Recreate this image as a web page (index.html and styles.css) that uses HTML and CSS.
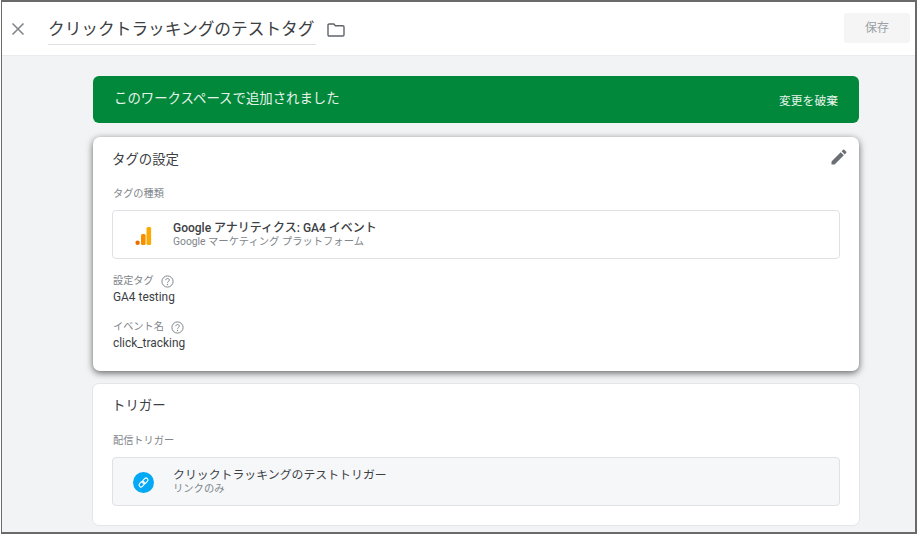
FILE: index.html
```html
<!doctype html>
<html lang="ja">
<head>
<meta charset="UTF-8">
<title>クリックトラッキングのテストタグ</title>
<link rel="stylesheet" href="styles.css">
</head>
<body>
<div class="frame">
  <div class="top">
    <svg class="close" width="14" height="14" viewBox="0 0 14 14"><path d="M1.5 1.5l11 11M12.5 1.5l-11 11" stroke="#80868b" stroke-width="1.6" fill="none"/></svg>
    <div class="name">クリックトラッキングのテストタグ</div>
    <svg class="folder" width="18" height="14" viewBox="0 0 18 14"><path d="M1 2.2C1 1.5 1.5 1 2.2 1h4.6l1.6 1.8h7.4c.7 0 1.2.5 1.2 1.2v7.8c0 .7-.5 1.2-1.2 1.2H2.2c-.7 0-1.2-.5-1.2-1.2z" stroke="#5f6368" stroke-width="1.4" fill="none"/></svg>
    <div class="save">保存</div>
  </div>
  <div class="main">
    <div class="banner">
      <span class="banner-text">このワークスペースで追加されました</span>
      <span class="discard">変更を破棄</span>
    </div>
    <div class="card raised">
      <svg class="pencil" width="20" height="20" viewBox="0 0 24 24"><path fill="#6b6f73" d="M3 17.25V21h3.75L17.81 9.94l-3.75-3.75L3 17.25zM20.71 7.04a1 1 0 0 0 0-1.41l-2.34-2.34a1 1 0 0 0-1.41 0l-1.83 1.83 3.75 3.75 1.83-1.83z"/></svg>
      <h2 class="card-title">タグの設定</h2>
      <div class="label first">タグの種類</div>
      <div class="row">
        <div class="row-icon">
          <svg width="20" height="20" viewBox="0 0 20 20"><rect x="13.5" y="1" width="4.6" height="18" rx="1.5" fill="#f9ab00"/><rect x="8" y="8" width="4.6" height="11" rx="1.5" fill="#f98d00"/><circle cx="4.6" cy="16.8" r="2.2" fill="#e86f00"/></svg>
        </div>
        <div>
          <div class="row-name strong">Google アナリティクス: GA4 イベント</div>
          <div class="row-sub">Google マーケティング プラットフォーム</div>
        </div>
      </div>
      <div class="field">
        <div class="label">設定タグ <svg class="help" width="13" height="13" viewBox="0 0 13 13"><circle cx="6.5" cy="6.5" r="5.6" stroke="#80868b" stroke-width="1" fill="none"/><path d="M4.8 5.2c0-2.2 3.5-2.2 3.5-.1 0 1.3-1.7 1.3-1.7 2.7" stroke="#80868b" stroke-width="1" fill="none"/><circle cx="6.5" cy="9.5" r=".7" fill="#80868b"/></svg></div>
        <div class="value">GA4 testing</div>
      </div>
      <div class="field">
        <div class="label">イベント名 <svg class="help" width="13" height="13" viewBox="0 0 13 13"><circle cx="6.5" cy="6.5" r="5.6" stroke="#80868b" stroke-width="1" fill="none"/><path d="M4.8 5.2c0-2.2 3.5-2.2 3.5-.1 0 1.3-1.7 1.3-1.7 2.7" stroke="#80868b" stroke-width="1" fill="none"/><circle cx="6.5" cy="9.5" r=".7" fill="#80868b"/></svg></div>
        <div class="value">click_tracking</div>
      </div>
    </div>
    <div class="card flat">
      <h2 class="card-title big">トリガー</h2>
      <div class="label first">配信トリガー</div>
      <div class="row grey">
        <div class="row-icon">
          <svg width="21" height="21" viewBox="0 0 21 21"><circle cx="10.5" cy="10.5" r="10.5" fill="#03a9f4"/><g transform="rotate(-45 10.5 10.5)" stroke="#fff" stroke-width="1.1" fill="none"><rect x="5" y="8.6" width="6.2" height="3.8" rx="1.9"/><rect x="9.8" y="8.6" width="6.2" height="3.8" rx="1.9"/></g></svg>
        </div>
        <div>
          <div class="row-name">クリックトラッキングのテストトリガー</div>
          <div class="row-sub">リンクのみ</div>
        </div>
      </div>
    </div>
  </div>
</div>
</body>
</html>
```
FILE: styles.css
```css
html,body{ margin:0;padding:0;background:#fff; }
body{ width:918px;height:536px;overflow:hidden;font-family:Roboto,"Noto Sans CJK JP",sans-serif;color:#202124; }
.frame{ box-sizing:border-box;width:916px;height:534px;margin:0 0 0 1px;border:2px solid #6a6a6a;border-width:2px 2px 2px 1px;display:flex;flex-direction:column;overflow:hidden;background:#f1f3f5; }

.top{ height:54px;flex:none;box-sizing:border-box;background:#fff;border-bottom:1px solid #e8eaed;display:flex;align-items:center;padding:0 0 0 9px; }
.close{ flex:none;margin-top:1px; }
.name{ margin-left:23px;width:268px;height:30px;line-height:29px;border-bottom:1px solid #e0e0e0;font-size:16.7px;color:#3c4043;white-space:nowrap;box-sizing:border-box;margin-top:2px; }
.folder{ margin-left:11px;margin-top:3px;flex:none; }
.save{ margin-left:auto;margin-right:5px;margin-top:-1px;width:66px;height:30px;line-height:30px;background:#f5f5f5;border-radius:3px;text-align:center;font-size:12px;color:#9aa0a6; }

.main{ flex:1;padding:20px 0 0 91px;width:766px; }
.banner{ height:47px;background:#02883a;border-radius:6px;display:flex;justify-content:space-between;align-items:center;padding:0 21px;color:#fff; }
.banner-text{ font-size:13.4px;color:#e6f3ea;margin-top:-5px; }
.discard{ font-size:11.8px;color:#e6f3ea; }

.card{ background:#fff;border-radius:7px;box-sizing:border-box;padding:0 19px;position:relative; }
.raised{ margin-top:14px;height:234px;box-shadow:0 2px 7px rgba(0,0,0,.6); }
.flat{ margin:12px -1px 0;height:143px;border:1px solid #e3e5e8; }
.pencil{ position:absolute;right:1px;top:1px;margin:9px 9px 0 0; }
.card-title{ margin:0;padding-top:15px;font-size:13.4px;line-height:16px;font-weight:400;color:#3c4043; }
.card-title.big{ padding-top:13px;font-size:13.4px;line-height:18px; }
.label{ font-size:10.2px;line-height:14px;color:#80868b;display:flex;align-items:center;padding-left:1px; }
.label.first{ margin-top:19px; }
.help{ margin-left:7px; }

.row{ margin-top:9px;height:49px;box-sizing:border-box;border:1px solid #dfe1e5;border-radius:4px;display:flex;align-items:center; }
.row.grey{ background:#f6f7f9; }
.row-icon{ width:60px;display:flex;justify-content:center;flex:none;padding-top:2px; }
.row-name{ font-size:11.9px;line-height:14px;color:#3c4043; }
.row-name.strong{ font-size:12px;font-weight:500; }
.row-sub{ font-size:10.3px;line-height:13px;color:#80868b; }
.field{ margin-top:15px; }
.value{ font-size:11.9px;line-height:15px;margin-top:2px;color:#3c4043;padding-left:1px; }
.field + .field{ margin-top:15px; }
```
